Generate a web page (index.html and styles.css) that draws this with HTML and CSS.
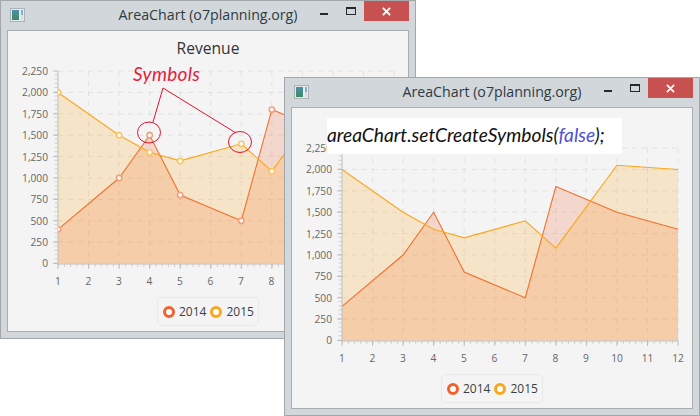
FILE: index.html
```html
<!DOCTYPE html>
<html lang="en">
<head>
<meta charset="utf-8">
<title>AreaChart</title>
<link rel="stylesheet" href="styles.css">
</head>
<body>
<svg class="defs" width="0" height="0" aria-hidden="true">
  <defs>
    <linearGradient id="appicon" x1="0" y1="0" x2="0" y2="1">
      <stop offset="0" stop-color="#4e8fa8"/><stop offset="1" stop-color="#3d8a62"/>
    </linearGradient>
    <clipPath id="plot"><rect x="58" y="60" width="340" height="210"/></clipPath>
    <g id="base">
      <g class="grid">
        <path d="M58 71.1H394M58 92.5H394M58 113.9H394M58 135.25H394M58 156.6H394M58 178H394M58 199.4H394M58 220.75H394M58 242.1H394"/>
        <path d="M88.55 71V263M119.1 71V263M149.65 71V263M180.2 71V263M210.75 71V263M241.3 71V263M271.85 71V263M302.4 71V263M332.95 71V263M363.5 71V263M394.05 71V263"/>
      </g>
      <path class="area a14" d="M58 229.3L119.1 178L149.65 135.25L180.2 195.1L241.3 220.75L271.85 109.6L332.95 135.25L394.05 152.3V263.5H58Z"/>
      <path class="area a15" d="M58 92.5L119.1 135.25L149.65 152.3L180.2 160.9L241.3 143.8L271.85 171.2L332.95 88.2L394.05 92.5V263.5H58Z"/>
      <path class="line l14" d="M58 229.3L119.1 178L149.65 135.25L180.2 195.1L241.3 220.75L271.85 109.6L332.95 135.25L394.05 152.3"/>
      <path class="line l15" d="M58 92.5L119.1 135.25L149.65 152.3L180.2 160.9L241.3 143.8L271.85 171.2L332.95 88.2L394.05 92.5"/>
      <path class="minor-y" d="M56 263.5V71"/>
      <path class="minor-x" d="M58 265.5H394"/>
      <path class="major" d="M53 71.1H58M53 92.5H58M53 113.9H58M53 135.25H58M53 156.6H58M53 178H58M53 199.4H58M53 220.75H58M53 242.1H58M53 263.5H58"/>
      <path class="major" d="M58 264V269M88.55 264V269M119.1 264V269M149.65 264V269M180.2 264V269M210.75 264V269M241.3 264V269M271.85 264V269M302.4 264V269M332.95 264V269M363.5 264V269M394.05 264V269"/>
      <path class="major" d="M58 71V264H394.5"/>
      <g class="ylabels">
        <text x="48" y="75">2,250</text><text x="48" y="96">2,000</text><text x="48" y="117.5">1,750</text>
        <text x="48" y="139">1,500</text><text x="48" y="160.5">1,250</text><text x="48" y="181.5">1,000</text>
        <text x="48" y="203">750</text><text x="48" y="224.5">500</text><text x="48" y="246">250</text><text x="48" y="267">0</text>
      </g>
      <g class="xlabels">
        <text x="58" y="285">1</text><text x="88.5" y="285">2</text><text x="119" y="285">3</text><text x="149.5" y="285">4</text>
        <text x="180" y="285">5</text><text x="210.5" y="285">6</text><text x="241" y="285">7</text><text x="271.5" y="285">8</text>
        <text x="302" y="285">9</text><text x="333" y="285">10</text><text x="363.5" y="285">11</text><text x="394" y="285">12</text>
      </g>
    </g>
  </defs>
</svg>

<main class="desktop">
  <section class="window window-back">
    <header class="titlebar">
      <svg class="appicon" viewBox="0 0 15 14"><rect x=".5" y=".5" width="14" height="13" class="icon-frame"/><rect x="2" y="2" width="7" height="10" fill="url(#appicon)"/><rect x="9" y="2" width="1.5" height="10" fill="#e9edf0"/><rect x="11" y="2" width="2" height="5" fill="#7fb3c9"/><rect x="11" y="7" width="2" height="5" fill="#d5dde0"/></svg>
      <h1 class="wintitle">AreaChart (o7planning.org)</h1>
      <div class="controls">
        <span class="btn-min"></span>
        <span class="btn-max"></span>
        <span class="btn-close"><svg viewBox="0 0 10 10"><path d="M1 1L9 9M9 1L1 9"/></svg></span>
      </div>
    </header>
    <div class="panel">
      <h2 class="charttitle">Revenue</h2>
      <svg class="chart" viewBox="8 60 400 230">
        <use href="#base"/>
        <g clip-path="url(#plot)">
          <g class="sym s14">
            <circle cx="58" cy="229.3" r="2.7"/><circle cx="119.1" cy="178" r="2.7"/><circle cx="149.65" cy="135.25" r="2.7"/><circle cx="180.2" cy="195.1" r="2.7"/><circle cx="241.3" cy="220.75" r="2.7"/><circle cx="271.85" cy="109.6" r="2.7"/><circle cx="332.95" cy="135.25" r="2.7"/>
          </g>
          <g class="sym s15">
            <circle cx="58" cy="92.5" r="2.7"/><circle cx="119.1" cy="135.25" r="2.7"/><circle cx="149.65" cy="152.3" r="2.7"/><circle cx="180.2" cy="160.9" r="2.7"/><circle cx="241.3" cy="143.8" r="2.7"/><circle cx="271.85" cy="171.2" r="2.7"/><circle cx="332.95" cy="88.2" r="2.7"/>
          </g>
        </g>
        <g class="note">
          <path d="M153 122L163 88L236 133"/>
          <ellipse cx="149" cy="132.5" rx="11.5" ry="10.5"/>
          <ellipse cx="240" cy="142" rx="11.5" ry="10.5"/>
          <text class="note-text" x="133" y="81">Symbols</text>
        </g>
      </svg>
      <div class="legend">
        <span class="dot dot14"></span><span class="lg">2014</span>
        <span class="dot dot15"></span><span class="lg">2015</span>
      </div>
    </div>
  </section>

  <section class="window window-front">
    <header class="titlebar">
      <svg class="appicon" viewBox="0 0 15 14"><rect x=".5" y=".5" width="14" height="13" class="icon-frame"/><rect x="2" y="2" width="7" height="10" fill="url(#appicon)"/><rect x="9" y="2" width="1.5" height="10" fill="#e9edf0"/><rect x="11" y="2" width="2" height="5" fill="#7fb3c9"/><rect x="11" y="7" width="2" height="5" fill="#d5dde0"/></svg>
      <h1 class="wintitle">AreaChart (o7planning.org)</h1>
      <div class="controls">
        <span class="btn-min"></span>
        <span class="btn-max"></span>
        <span class="btn-close"><svg viewBox="0 0 10 10"><path d="M1 1L9 9M9 1L1 9"/></svg></span>
      </div>
    </header>
    <div class="panel">
      <h2 class="charttitle">&nbsp;</h2>
      <svg class="chart" viewBox="8 60 400 230"><use href="#base"/></svg>
      <div class="legend">
        <span class="dot dot14"></span><span class="lg">2014</span>
        <span class="dot dot15"></span><span class="lg">2015</span>
      </div>
      <div class="codebox">areaChart.setCreateSymbols(<span class="kw">false</span>);</div>
    </div>
  </section>
</main>
</body>
</html>
```
FILE: styles.css
```css
* { box-sizing: border-box; }
html, body { margin: 0; padding: 0; background: #fff; }
body { width: 700px; height: 416px; overflow: hidden; font-family: "Open Sans", "Noto Sans", sans-serif; }
.defs { position: absolute; }
.desktop { position: relative; width: 700px; height: 416px; }

.window {
  position: absolute;
  width: 416px;
  height: 339px;
  display: flex;
  flex-direction: column;
  background: #d2d7db;
  border: 1px solid #a3a7aa;
  padding: 0 6px 6px;
}
.window-back { left: 0; top: 0; }
.window-front { left: 284px; top: 77px; }

.titlebar { position: relative; height: 29px; display: flex; align-items: center; justify-content: center; flex: none; }
.appicon { position: absolute; left: 3px; top: 7px; width: 15px; height: 14px; }
.icon-frame { fill: #e4e8eb; stroke: #aeb3b7; }
.wintitle { margin: 0; font-size: 14.2px; font-weight: 400; color: #2f3a42; line-height: 29px; position: relative; top: -1px; }
.controls { position: absolute; right: 0; top: 0; display: flex; align-items: flex-start; }
.btn-min { width: 8px; height: 2px; background: #23282c; margin: 12px 18px 0 0; }
.btn-max { width: 10px; height: 8px; border: 1px solid #23282c; border-top-width: 2px; margin: 6px 8px 0 0; }
.btn-close { width: 45px; height: 20px; background: #c75050; display: flex; align-items: center; justify-content: center; }
.btn-close svg { width: 9px; height: 9px; fill: none; stroke: #fff; stroke-width: 2; }

.panel {
  position: relative;
  flex: 1;
  display: flex;
  flex-direction: column;
  align-items: center;
  background: #f4f4f4;
  border: 1px solid #a9adb0;
}
.charttitle { margin: 0; height: 29px; line-height: 34px; font-size: 15.6px; font-weight: 400; color: #333; flex: none; }
.chart { display: block; width: 400px; height: 230px; flex: none; }
.chart text { font-family: "Open Sans", "Noto Sans", sans-serif; }

.grid path { fill: none; stroke: #e2e2e2; stroke-width: 1; stroke-dasharray: 5 5; }
.area { stroke: none; }
.a14 { fill: #f3622d; fill-opacity: .2; }
.a15 { fill: #fba71b; fill-opacity: .2; }
.line { fill: none; stroke-width: 1.1; }
.l14 { stroke: #f3702f; }
.l15 { stroke: #fba71b; }
.major { fill: none; stroke: #bdbdbd; stroke-width: 1; }
.minor-y { fill: none; stroke: #d0d0d0; stroke-width: 3; stroke-dasharray: 1 3.28; }
.minor-x { fill: none; stroke: #d0d0d0; stroke-width: 3; stroke-dasharray: 1 5.11; stroke-dashoffset: -6; }
.ylabels text { font-size: 10.2px; fill: #666; text-anchor: end; }
.xlabels text { font-size: 10.2px; fill: #666; text-anchor: middle; }

.sym circle { fill: #fff8f0; stroke-width: 1.4; }
.s14 circle { stroke: #f59a78; }
.s15 circle { stroke: #fbc25f; }
.note path, .note ellipse { fill: none; stroke: #e2122c; stroke-width: 1; }
.chart .note-text { font-family: "Lato", sans-serif; font-style: italic; font-size: 19px; letter-spacing: .3px; fill: #e8203a; }

.legend {
  margin-top: 7px;
  width: 102px;
  height: 29px;
  display: flex;
  align-items: center;
  padding-left: 5px;
  border: 1px solid #e9e9e9;
  border-radius: 5px;
  flex: none;
}
.dot { width: 12px; height: 12px; border-radius: 50%; background: #fff; flex: none; }
.dot14 { border: 3.5px solid #f3622d; }
.dot15 { border: 3.5px solid #fba71b; margin-left: 4px; }
.lg { font-size: 12px; color: #3a3f44; margin-left: 4px; }

.codebox {
  position: absolute;
  left: 35px;
  top: 10px;
  width: 295px;
  height: 36px;
  background: #fff;
  font-family: "Lato", sans-serif;
  font-style: italic;
  font-size: 19.2px;
  line-height: 34px;
  color: #111;
  white-space: nowrap;
}
.kw { color: #5050d8; }
```
